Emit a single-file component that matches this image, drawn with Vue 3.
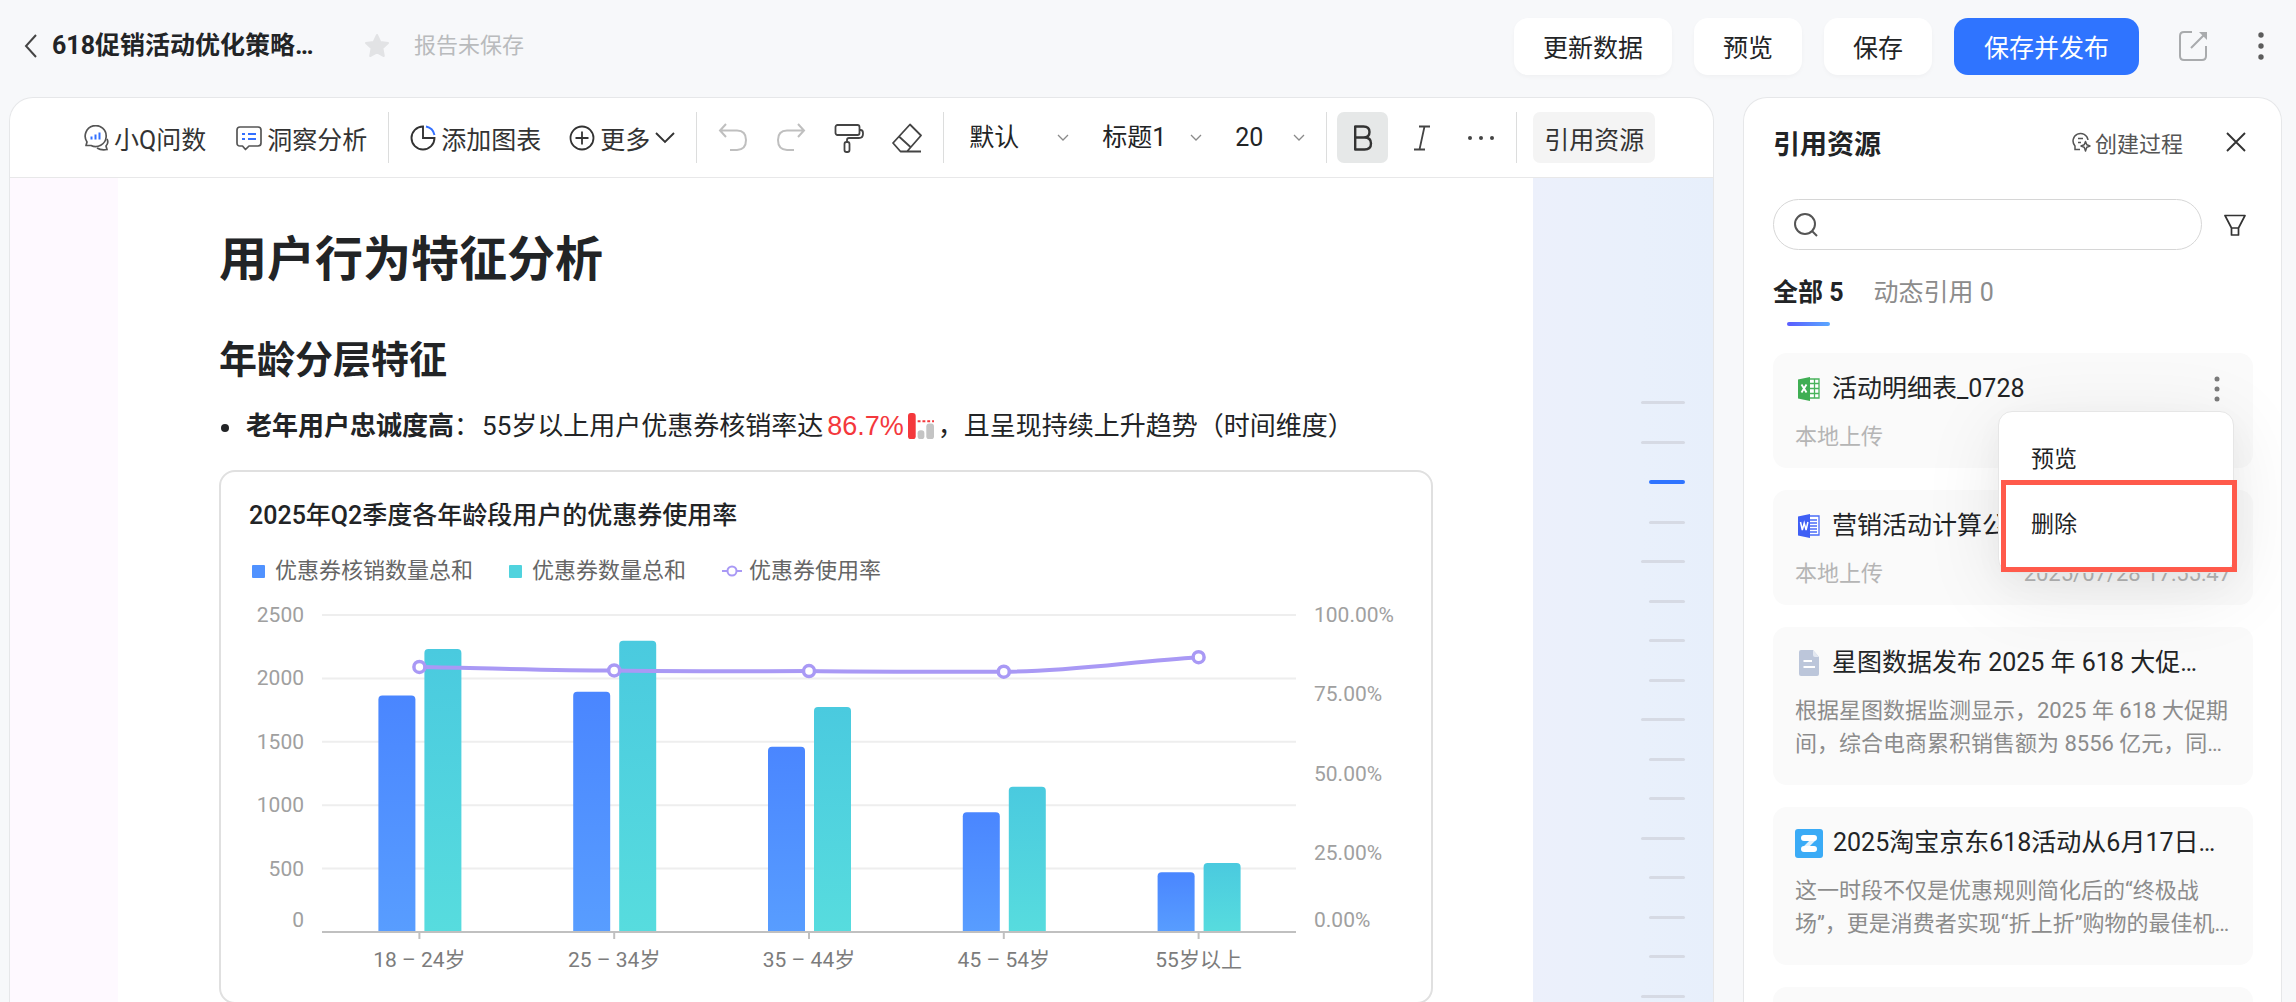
<script setup>
import { ref } from 'vue'

const bold = ref(true)
const keyword = ref('')
const activeTab = ref(0)

const tabs = [
  { label: '全部', count: 5 },
  { label: '动态引用', count: 0 },
]

// Chart geometry, in viewBox units
const plot = { left: 101, right: 1075, top: 30, bottom: 347 }
const step = (plot.right - plot.left) / 5
const groups = [
  { label: '18 – 24岁', used: 1866, total: 2232, rate: 83.6 },
  { label: '25 – 34岁', used: 1895, total: 2296, rate: 82.5 },
  { label: '35 – 44岁', used: 1461, total: 1774, rate: 82.3 },
  { label: '45 – 54岁', used: 944, total: 1146, rate: 82.1 },
  { label: '55岁以上', used: 472, total: 544, rate: 86.7 },
]
const height = plot.bottom - plot.top
const yCount = (v) => plot.bottom - (v / 2500) * height
const yRate = (v) => plot.bottom - (v / 100) * height
const centre = (i) => plot.left + step * (i + 0.5)
const barPath = (x, v) => {
  const y = yCount(v)
  return `M${x} ${plot.bottom}V${y + 4}q0-4 4-4h29q4 0 4 4V${plot.bottom}z`
}
const countTicks = [2500, 2000, 1500, 1000, 500, 0]
const rateTicks = [100, 75, 50, 25, 0]
const labelY = (y) => Math.min(y, plot.bottom - 12) + 7

const points = groups.map((g, i) => [centre(i), yRate(g.rate)])
const linePath = points
  .map(([x, y], i) => {
    if (i === 0) return `M${x} ${y}`
    const [px, py] = points[i - 1]
    const third = step / 3
    const last = i === points.length - 1
    return last
      ? `C${px + third} ${py} ${x - third} ${y + 4} ${x} ${y}`
      : `C${px + third} ${py + 1} ${x - third} ${y} ${x} ${y}`
  })
  .join('')

const outline = ['l', 'l', 'on', 's', 'l', 's', 's', 's', 'l', 's', 's', 'l', 's', 's', 's', 'l']
</script>

<template>
  <div class="app">
    <header class="topbar">
      <button class="plain" aria-label="返回">
        <svg width="13" height="24" viewBox="0 0 13 24"><path d="M12 1 2 12l10 11" fill="none" stroke="#444" stroke-width="2" /></svg>
      </button>
      <h1 class="report-name">618促销活动优化策略…</h1>
      <button class="plain star" aria-label="收藏">
        <svg width="26" height="26" viewBox="0 0 26 26"><path d="m13 2 3.3 7 7.7 1-5.6 5.3 1.4 7.7L13 19.3 6.2 23l1.4-7.7L2 10l7.7-1z" fill="#e2e3e5" stroke="#e2e3e5" stroke-width="2" stroke-linejoin="round" /></svg>
      </button>
      <span class="status">报告未保存</span>
      <div class="top-actions">
        <button class="btn">更新数据</button>
        <button class="btn">预览</button>
        <button class="btn">保存</button>
        <button class="btn primary">保存并发布</button>
      </div>
      <div class="top-icons">
        <button class="plain" aria-label="分享">
          <svg width="30" height="32" viewBox="0 0 30 32"><path d="M14 2H6Q2 2 2 6v20q0 4 4 4h18q4 0 4-4V16M13 18 27 4" fill="none" stroke="#a9abad" stroke-width="2" /><path d="M21 2h8v8z" fill="#a9abad" /></svg>
        </button>
        <button class="plain" aria-label="更多操作">
          <svg width="8" height="30" viewBox="0 0 8 30" fill="#5c5c5c"><circle cx="4" cy="4" r="2.7" /><circle cx="4" cy="15" r="2.7" /><circle cx="4" cy="26" r="2.7" /></svg>
        </button>
      </div>
    </header>

    <div class="body">
      <main class="editor">
        <div class="toolbar">
          <div class="group ask">
            <button class="tool">
              <svg width="26" height="26" viewBox="0 0 26 26" fill="none" stroke="#555" stroke-width="1.7"><path d="M3 20.5 4 17A10.5 10.5 0 1 1 8 20.5z" stroke-linejoin="round" /><path d="M24 14q2 4-1 7l1 3.5q-6 1-10-1.5" /><path d="M8.5 14.5v-3M12.5 14.5v-5M16.5 14.5v-7" stroke="#3370ff" stroke-width="2" /></svg>
              小Q问数
            </button>
            <button class="tool">
              <svg width="26" height="26" viewBox="0 0 26 26" fill="none" stroke="#555" stroke-width="1.7"><path d="M4 2h18q3 0 3 3v13q0 3-3 3h-9l-3.5 3.5L6.5 21H4q-3 0-3-3V5q0-3 3-3z" stroke-linejoin="round" /><path d="M6 9h3m3 0h8M6 14h3m3 0h8" stroke="#3370ff" stroke-width="2" /></svg>
              洞察分析
            </button>
          </div>
          <i class="divider"></i>
          <div class="group">
            <button class="tool">
              <svg width="26" height="26" viewBox="0 0 26 26" fill="none" stroke-width="1.9"><path d="M13 1.5A11.5 11.5 0 1 0 24.5 13H13z" stroke="#333" /><path d="M16 1.5A11 11 0 0 1 24.5 10" stroke="#3370ff" /></svg>
              添加图表
            </button>
            <button class="tool">
              <svg width="26" height="26" viewBox="0 0 26 26" fill="none" stroke="#333" stroke-width="1.8"><circle cx="13" cy="13" r="11.5" /><path d="M13 6.5v13M6.5 13h13" /></svg>
              更多
              <svg width="20" height="12" viewBox="0 0 20 12"><path d="m1 1 9 9 9-9" fill="none" stroke="#333" stroke-width="1.9" /></svg>
            </button>
          </div>
          <i class="divider"></i>
          <div class="group">
            <button class="tool" aria-label="撤销">
              <svg width="30" height="30" viewBox="0 0 30 30" fill="none" stroke="#bfbfbf" stroke-width="2"><path d="M8 1 2 7.5 8 14M2 7.5h17q9 0 9 9.500t-9 10h-7" /></svg>
            </button>
            <button class="tool" aria-label="重做">
              <svg width="30" height="30" viewBox="0 0 30 30" fill="none" stroke="#bfbfbf" stroke-width="2"><path d="m22 1 6 6.500L22 14M28 7.500H11q-9 0-9 9.500t9 10h7" /></svg>
            </button>
            <button class="tool" aria-label="格式刷">
              <svg width="30" height="30" viewBox="0 0 30 30" fill="none" stroke="#444" stroke-width="1.8"><rect x="1.5" y="2" width="24" height="10" rx="2" /><path d="M25.5 7h1q2.5 0 2.5 3v1q0 4-4 4H15q-2 0-2 2v2" /><rect x="10.5" y="19" width="5" height="10" rx="2" /></svg>
            </button>
            <button class="tool" aria-label="清除格式">
              <svg width="30" height="30" viewBox="0 0 30 30" fill="none" stroke="#444" stroke-width="1.8" stroke-linejoin="round"><path d="M18 1.5 29 12.5 15 28.5H8.500L1 20zM7 13.5 19 24.5M8.5 28.5H29" /></svg>
            </button>
          </div>
          <i class="divider"></i>
          <div class="group selects">
            <label class="picker">
              <select aria-label="字体"><option>默认</option></select>
              <svg width="12" height="8" viewBox="0 0 12 8"><path d="m1 1 5 5 5-5" /></svg>
            </label>
            <label class="picker">
              <select aria-label="段落样式"><option>标题1</option></select>
              <svg width="12" height="8" viewBox="0 0 12 8"><path d="m1 1 5 5 5-5" /></svg>
            </label>
            <label class="picker small">
              <select aria-label="字号"><option>20</option></select>
              <svg width="12" height="8" viewBox="0 0 12 8"><path d="m1 1 5 5 5-5" /></svg>
            </label>
          </div>
          <i class="divider tight"></i>
          <div class="group marks">
            <button class="mark" :class="{ on: bold }" aria-label="加粗" @click="bold = !bold">
              <svg width="20" height="26" viewBox="0 0 20 26" fill="none" stroke="#333" stroke-width="2.4"><path d="M2.2 1.5h8.3q6 0 6 5.500t-6 5.500H2.200zM2.200 12.5h9.3q6.5 0 6.5 6t-6.5 6H2.200z" stroke-linejoin="round" /></svg>
            </button>
            <button class="mark" aria-label="斜体">
              <svg width="18" height="26" viewBox="0 0 18 26" fill="none" stroke="#444" stroke-width="1.8"><path d="M6 1.5h11M1 24.5h11M11.5 1.5l-5 23" /></svg>
            </button>
            <button class="mark" aria-label="更多格式">
              <svg width="28" height="6" viewBox="0 0 28 6" fill="#444"><circle cx="3" cy="3" r="2" /><circle cx="14" cy="3" r="2" /><circle cx="25" cy="3" r="2" /></svg>
            </button>
          </div>
          <i class="divider tight"></i>
          <button class="quote-btn">引用资源</button>
        </div>

        <div class="canvas">
          <article class="page">
            <h2 class="title">用户行为特征分析</h2>
            <h3 class="subtitle">年龄分层特征</h3>
            <ul class="points">
              <li>
                <strong>老年用户忠诚度高</strong>：<span class="finding">55岁以上用户优惠券核销率达</span><span class="figure">86.7%</span>
                <svg class="spark" width="26" height="27" viewBox="0 0 27 28"><rect width="8" height="27" rx="3" fill="#f4383c" /><rect x="10" y="18" width="7" height="9" rx="3" fill="#c4c4c4" /><rect x="19" y="11" width="8" height="16" rx="3" fill="#c4c4c4" /><path d="M10 8.5h17" stroke="#f4383c" stroke-width="2" stroke-dasharray="3 2" /></svg>
                <span>，且呈现持续上升趋势（时间维度）</span>
              </li>
            </ul>

            <section class="chart-card">
              <h4 class="chart-title">2025年Q2季度各年龄段用户的优惠券使用率</h4>
              <div class="legend">
                <span class="key"><i class="swatch blue"></i>优惠券核销数量总和</span>
                <span class="key"><i class="swatch teal"></i>优惠券数量总和</span>
                <span class="key line-key">
                  <svg width="20" height="12" viewBox="0 0 20 12"><path d="M0 6h20" stroke="#a999f5" stroke-width="2" /><circle cx="10" cy="6" r="4.5" fill="#fff" stroke="#a999f5" stroke-width="2" /></svg>优惠券使用率
                </span>
              </div>
              <svg class="chart" viewBox="0 0 1210 417" role="img" aria-label="各年龄段优惠券使用率">
                <defs>
                  <linearGradient id="barBlue" x1="0" y1="0" x2="0" y2="1"><stop offset="0" stop-color="#4a86ff" /><stop offset="1" stop-color="#589dff" /></linearGradient>
                  <linearGradient id="barTeal" x1="0" y1="0" x2="0" y2="1"><stop offset="0" stop-color="#4acadf" /><stop offset="1" stop-color="#57dcde" /></linearGradient>
                </defs>
                <g v-for="t in countTicks" :key="t">
                  <line v-if="t" :x1="plot.left" :x2="plot.right" :y1="yCount(t)" :y2="yCount(t)" stroke="#eeeeee" stroke-width="2" />
                  <text class="axis" x="83" :y="labelY(yCount(t))" text-anchor="end">{{ t }}</text>
                </g>
                <text v-for="t in rateTicks" :key="'r' + t" class="axis" x="1093" :y="labelY(yRate(t))">{{ t.toFixed(2) }}%</text>
                <g v-for="(g, i) in groups" :key="g.label">
                  <path :d="barPath(centre(i) - 41, g.used)" fill="url(#barBlue)" />
                  <path :d="barPath(centre(i) + 5, g.total)" fill="url(#barTeal)" />
                  <line :x1="centre(i)" :x2="centre(i)" :y1="plot.bottom" :y2="plot.bottom + 7" stroke="#c0c0c0" stroke-width="2" />
                  <text class="axis cat" :x="centre(i)" y="382" text-anchor="middle">{{ g.label }}</text>
                </g>
                <line :x1="plot.left" :x2="plot.right" :y1="plot.bottom" :y2="plot.bottom" stroke="#c0c0c0" stroke-width="2" />
                <path :d="linePath" fill="none" stroke="#a999f5" stroke-width="4" />
                <circle v-for="([x, y], i) in points" :key="i" :cx="x" :cy="y" r="5.5" fill="#fff" stroke="#a999f5" stroke-width="3.5" />
              </svg>
            </section>
          </article>
          <nav class="outline" aria-label="大纲">
            <i v-for="(kind, i) in outline" :key="i" :class="kind"></i>
          </nav>
        </div>
      </main>

      <aside class="side">
        <div class="side-head">
          <h2>引用资源</h2>
          <button class="plain process">
            <svg width="20" height="20" viewBox="0 0 20 20" fill="none" stroke="#555" stroke-width="1.5"><path d="M9 17.5H4v-3.5A7.5 7.5 0 1 1 17 8M7 6.5h5M7 10.5h3" /><path d="m14.5 9.5 1.3 3.2 3.2 1.3-3.2 1.3-1.3 3.7-1.3-3.7L10 14l3.2-1.3z" stroke-linejoin="round" /></svg>
            创建过程
          </button>
          <button class="plain" aria-label="关闭">
            <svg width="20" height="20" viewBox="0 0 20 20"><path d="m1 1 18 18M19 1 1 19" stroke="#333" stroke-width="1.9" /></svg>
          </button>
        </div>
        <div class="search-row">
          <label class="search">
            <svg width="24" height="24" viewBox="0 0 24 24" fill="none" stroke="#555" stroke-width="2"><circle cx="11" cy="11" r="10" /><path d="m18 18 5 5" /></svg>
            <input v-model="keyword" type="text" aria-label="搜索资源" />
          </label>
          <button class="plain" aria-label="筛选">
            <svg width="22" height="22" viewBox="0 0 22 22" fill="none" stroke="#333" stroke-width="1.7" stroke-linejoin="round"><path d="M1 1.5h20L14.5 14v7h-7v-7zM7.5 14h7" /></svg>
          </button>
        </div>
        <div class="tabs">
          <button v-for="(t, i) in tabs" :key="t.label" class="tab" :class="{ active: i === activeTab }" @click="activeTab = i">{{ t.label }} {{ t.count }}</button>
        </div>

        <div class="cards">
          <section class="card">
            <div class="card-head">
              <svg width="27" height="28" viewBox="0 0 27 28"><path d="M15 4h9v19h-9" fill="#fff" stroke="#49b35c" stroke-width="1.3" /><path d="M15 8.5h9M15 13.5h9M15 18.5h9M19.5 4v19" stroke="#49b35c" stroke-width="1.3" /><path d="M3 4.5 15 2v24L3 23.5z" fill="#3fae53" /><path d="m6.5 9.5 5 8M11.5 9.5l-5 8" stroke="#fff" stroke-width="1.9" /></svg>
              <h3>活动明细表_0728</h3>
              <button class="plain kebab" aria-label="更多">
                <svg width="6" height="26" viewBox="0 0 6 26" fill="#7b7b7b"><circle cx="3" cy="3" r="2.5" /><circle cx="3" cy="13" r="2.5" /><circle cx="3" cy="23" r="2.5" /></svg>
              </button>
            </div>
            <div class="meta"><span>本地上传</span></div>
            <div class="menu">
              <button>预览</button>
              <button>删除</button>
              <i class="highlight"></i>
            </div>
          </section>

          <section class="card">
            <div class="card-head">
              <svg width="27" height="28" viewBox="0 0 27 28"><path d="M15 4h9v19h-9" fill="#fff" stroke="#4a6cf7" stroke-width="1.3" /><path d="M15 8h7M15 11h7M15 14h7M15 17h7M15 20h7" stroke="#4a6cf7" stroke-width="1.3" /><path d="M3 4.5 15 2v24L3 23.5z" fill="#3f5ff5" /><path d="m5.5 10 1.800 8L9.200 11l1.900 7 1.800-8" fill="none" stroke="#fff" stroke-width="1.5" /></svg>
              <h3>营销活动计算公式</h3>
            </div>
            <div class="meta"><span>本地上传</span><time>2025/07/28 17:55:47</time></div>
          </section>

          <section class="card long">
            <div class="card-head">
              <svg width="27" height="28" viewBox="0 0 27 28"><path d="M6 1h12l6 7v17q0 2-2 2H6q-2 0-2-2V3q0-2 2-2z" fill="#bcc6da" /><path d="M18 1v5q0 2 2 2h4z" fill="#e3e8f1" /><path d="M8.5 12H17M8.500 18H20" stroke="#fff" stroke-width="2" /></svg>
              <h3>星图数据发布 2025 年 618 大促…</h3>
            </div>
            <p>根据星图数据监测显示，2025 年 618 大促期<br />间，综合电商累积销售额为 8556 亿元，同…</p>
          </section>

          <section class="card long">
            <div class="card-head">
              <svg width="28" height="29" viewBox="0 0 28 29"><rect width="28" height="29" rx="3" fill="#3aabf6" /><path d="M9 9h10M9 20h10" fill="none" stroke="#fff" stroke-width="6" stroke-linecap="round" /><path d="m19 10-9 9" stroke="#fff" stroke-width="4" opacity=".85" /></svg>
              <h3>2025淘宝京东618活动从6月17日…</h3>
            </div>
            <p>这一时段不仅是优惠规则简化后的“终极战<br />场”，更是消费者实现“折上折”购物的最佳机…</p>
          </section>

          <section class="card long"></section>
        </div>
      </aside>
    </div>
  </div>
</template>

<style>
body {
  background: #f7f8fa;
}
</style>

<style scoped>
.app {
  display: flex;
  flex-direction: column;
  height: 100vh;
  overflow: hidden;
  background: #f7f8fa;
  color: #222426;
  font-family: Roboto, "Noto Sans CJK SC", sans-serif;
  font-size: 25px;
}
.app *,
.app *::after {
  box-sizing: border-box;
}
h1, h2, h3, h4, p, ul {
  margin: 0;
  padding: 0;
}
button, select, input {
  font: inherit;
  color: inherit;
  border: 0;
  background: none;
  padding: 0;
  margin: 0;
}
svg {
  display: block;
  flex: none;
}
.plain {
  display: flex;
  align-items: center;
}

/* top bar */
.topbar {
  display: flex;
  align-items: center;
  flex: none;
  height: 97px;
  padding: 0 31px 5px 24px;
}
.report-name {
  width: 265px;
  margin-left: 15px;
  font-size: 25px;
  font-weight: 700;
  line-height: 36px;
  white-space: nowrap;
}
.star {
  margin-left: 47px;
}
.status {
  margin-left: 24px;
  font-size: 22px;
  line-height: 36px;
  color: #b9bbbd;
}
.top-actions {
  display: flex;
  gap: 22px;
  margin-left: auto;
}
.btn {
  height: 57px;
  padding: 0 29px;
  border-radius: 14px;
  background: #fff;
  box-shadow: 0 2px 4px rgba(0, 0, 0, 0.03);
  white-space: nowrap;
}
.btn.primary {
  padding: 0 30px;
  background: #2f74ff;
  color: #fff;
  box-shadow: none;
}
.top-icons {
  display: flex;
  align-items: center;
  gap: 49px;
  margin-left: 39px;
}

.body {
  display: flex;
  flex: 1;
  min-height: 0;
  gap: 29px;
  padding: 0 14px 0 9px;
}
.editor,
.side {
  border: 1px solid #e6e7e9;
  border-bottom: 0;
  border-radius: 24px 24px 0 0;
  background: #fff;
  overflow: hidden;
}
.editor {
  display: flex;
  flex-direction: column;
  flex: 1;
  min-width: 0;
}

/* toolbar */
.toolbar {
  display: flex;
  align-items: center;
  flex: none;
  height: 80px;
  padding-left: 73px;
  border-bottom: 1px solid #e8e8e9;
  color: #333;
  white-space: nowrap;
}
.group {
  display: flex;
  align-items: center;
  gap: 28px;
}
.group.ask {
  gap: 30px;
}
.tool {
  display: flex;
  align-items: center;
  gap: 5px;
}
.divider {
  flex: none;
  width: 1px;
  height: 51px;
  margin: 0 21px;
  background: #dcdddd;
}
.divider.tight {
  margin-right: 10px;
}
.selects {
  gap: 33px;
  padding-left: 4px;
  color: #222426;
}
.picker {
  display: flex;
  align-items: center;
  width: 100px;
}
.picker.small {
  width: 70px;
}
.picker select {
  flex: 1;
  min-width: 0;
  appearance: none;
}
.picker path {
  fill: none;
  stroke: #8a8a8a;
  stroke-width: 1.3;
}
.marks {
  gap: 8px;
}
.marks + .divider {
  margin: 0 16px 0 10px;
}
.mark {
  display: flex;
  align-items: center;
  justify-content: center;
  width: 51px;
  height: 51px;
  border-radius: 7px;
}
.mark.on {
  background: #e6e8e8;
}
.quote-btn {
  height: 51px;
  padding: 0 11px;
  border-radius: 7px;
  background: #f4f4f4;
}

/* document */
.canvas {
  display: flex;
  flex: 1;
  min-height: 0;
  overflow: hidden;
  padding-left: 108px;
  background: #fef9ff;
}
.page {
  flex: 1;
  min-width: 0;
  padding: 50px 100px 0 101px;
  background: #fff;
}
.title {
  font-size: 48px;
  font-weight: 700;
  line-height: 64px;
}
.subtitle {
  margin-top: 42px;
  font-size: 38px;
  font-weight: 700;
  line-height: 52px;
}
.points {
  margin-top: 20px;
  font-size: 26px;
  line-height: 40px;
  list-style: none;
}
.points li {
  display: flex;
  align-items: center;
  white-space: nowrap;
}
.points li::before {
  content: "";
  width: 8px;
  height: 8px;
  margin: 4px 17px 0 2px;
  border-radius: 50%;
  background: #222426;
}
.points strong {
  font-weight: 700;
}
.finding {
  margin: 0 4px 0 2px;
}
.figure {
  font-family: "Liberation Sans", sans-serif;
  font-size: 27px;
  color: #f4383c;
}
.spark {
  margin: 0 4px;
}
.chart-card {
  margin-top: 24px;
  padding-top: 28px;
  border: 2px solid #e0e0e0;
  border-radius: 16px;
}
.chart-title {
  padding-left: 28px;
  font-size: 25px;
  font-weight: 500;
  line-height: 32px;
}
.legend {
  display: flex;
  gap: 36px;
  margin: 25px 0 0 31px;
  font-size: 22px;
  line-height: 28px;
  color: #666;
}
.key {
  display: flex;
  align-items: center;
  gap: 10px;
}
.line-key {
  gap: 7px;
}
.swatch {
  width: 13px;
  height: 13px;
  border-radius: 1px;
}
.swatch.blue {
  background: #5092ff;
}
.swatch.teal {
  background: #50d3de;
}
.chart {
  width: 100%;
}
.axis {
  font-size: 21px;
  fill: #a0a0a0;
}
.axis.cat {
  fill: #7c7c7c;
}
.outline {
  display: flex;
  flex-direction: column;
  align-items: flex-end;
  justify-content: space-between;
  flex: none;
  width: 180px;
  height: 100%;
  padding: 223px 28px 4px 0;
  background: linear-gradient(90deg, #ecf0fb, #e9f0fb 60%, #e7effb);
}
.outline i {
  width: 36px;
  height: 3px;
  border-radius: 2px;
  background: #d6dae4;
}
.outline i.l {
  width: 44px;
}
.outline i.on {
  height: 4px;
  background: #2f74ff;
}

/* side panel */
.side {
  flex: none;
  width: 539px;
  padding: 0 28px 0 29px;
}
.side-head {
  display: flex;
  align-items: center;
  height: 88px;
}
.side-head h2 {
  margin-right: auto;
  font-size: 27px;
  font-weight: 700;
}
.process {
  gap: 4px;
  margin-right: 43px;
  font-size: 22px;
  color: #555;
}
.side-head button:last-child {
  margin-right: 7px;
}
.search-row {
  display: flex;
  align-items: center;
  margin: 13px 7px 0 0;
  gap: 22px;
}
.search {
  display: flex;
  align-items: center;
  flex: 1;
  gap: 12px;
  height: 51px;
  padding: 0 20px;
  border: 1px solid #d6d6d6;
  border-radius: 26px;
}
.search input {
  flex: 1;
  min-width: 0;
  outline: 0;
}
.tabs {
  display: flex;
  gap: 30px;
  margin-top: 22px;
}
.tab {
  display: flex;
  flex-direction: column;
  align-items: center;
  height: 54px;
  color: #8c8c8c;
  line-height: 42px;
}
.tab.active {
  color: #222426;
  font-weight: 700;
}
.tab.active::after {
  content: "";
  width: 43px;
  height: 4px;
  margin-top: 8px;
  border-radius: 2px;
  background: linear-gradient(90deg, #5a5cff, #5aa8ff);
}
.cards {
  display: flex;
  flex-direction: column;
  gap: 22px;
  margin-top: 27px;
}
.card {
  position: relative;
  min-height: 115px;
  padding: 20px 22px 0;
  border-radius: 14px;
  background: #fafafa;
}
.card.long {
  min-height: 158px;
}
.card-head {
  display: flex;
  align-items: center;
  gap: 10px;
  height: 32px;
}
.card-head h3 {
  font-size: 25px;
  font-weight: 400;
  line-height: 32px;
  white-space: nowrap;
}
.kebab {
  margin: 0 11px 0 auto;
}
.meta {
  display: flex;
  justify-content: space-between;
  margin-top: 15px;
  font-size: 22px;
  line-height: 33px;
  color: #b5b5b5;
}
.card p {
  margin-top: 15px;
  font-size: 22px;
  line-height: 33px;
  color: #8c8c8c;
  white-space: nowrap;
}
.menu {
  position: absolute;
  z-index: 2;
  top: 58px;
  right: 19px;
  width: 236px;
  padding: 15px 0;
  border: 1px solid #e6e6e6;
  border-radius: 14px;
  background: #fff;
  box-shadow: 0 16px 80px rgba(0, 0, 0, 0.09), 0 10px 30px rgba(0, 0, 0, 0.03);
}
.menu button {
  display: block;
  width: 100%;
  height: 65px;
  padding: 0 0 5px 32px;
  font-size: 23px;
  text-align: left;
}
.highlight {
  position: absolute;
  top: 68px;
  left: 2px;
  width: 236px;
  height: 92px;
  border: 5px solid #ff5a4b;
}
</style>
